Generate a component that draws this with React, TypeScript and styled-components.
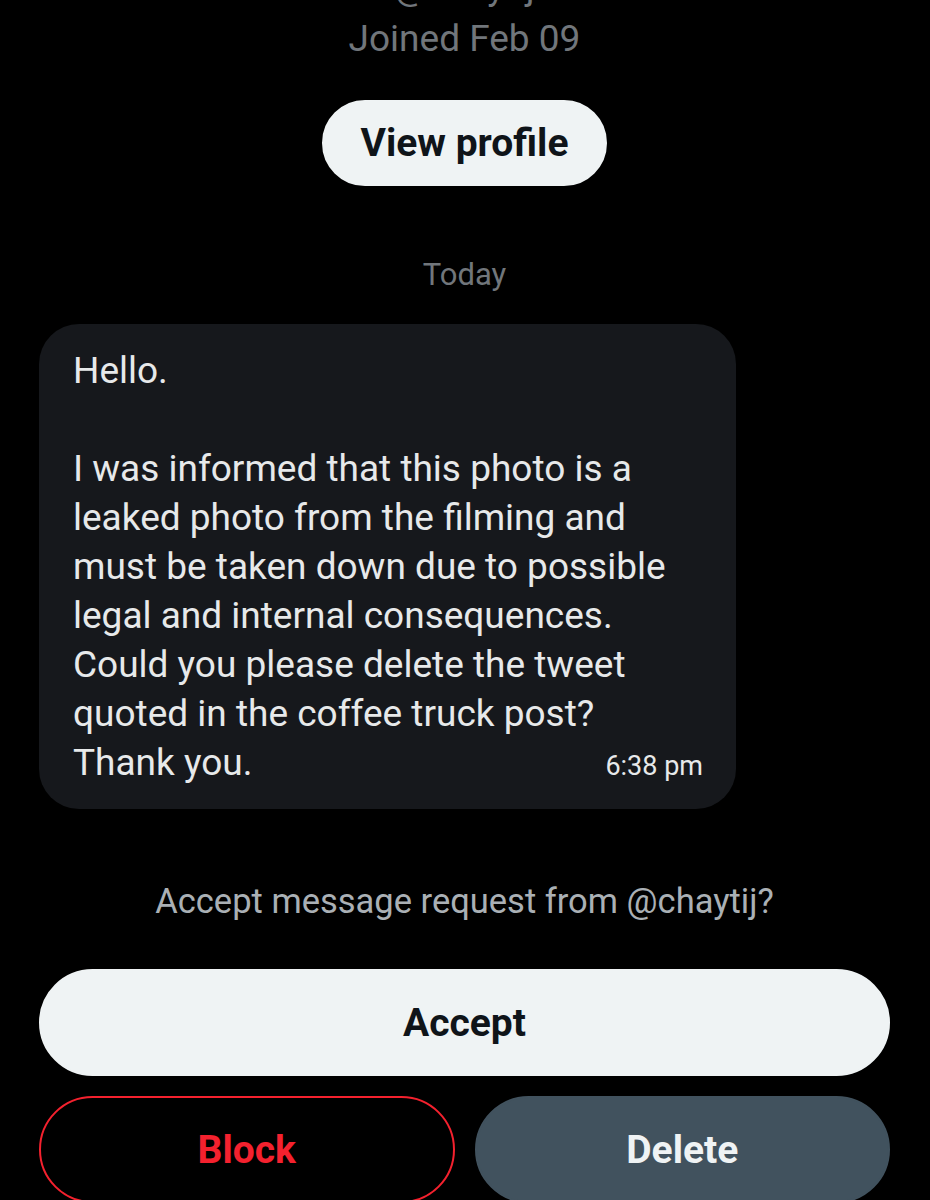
import React from 'react';
import styled, {createGlobalStyle} from 'styled-components';

const GlobalStyle = createGlobalStyle`
    html, body {
        margin: 0;
        padding: 0;
        background: #000;
    }

    body {
        font-family: Roboto, "Noto Sans", "Liberation Sans", sans-serif;
        -webkit-font-smoothing: antialiased;
    }
`;

const messageLines = [
    'I was informed that this photo is a',
    'leaked photo from the filming and',
    'must be taken down due to possible',
    'legal and internal consequences.',
    'Could you please delete the tweet',
    'quoted in the coffee truck post?',
];

export default function App() {
    return (
        <>
            <GlobalStyle/>
            <Page>
                <ProfileSummary>
                    <Handle>@chaytij</Handle>
                    <Joined>Joined Feb 09</Joined>
                    <PillButton $variant="light" $width="285px" $height="86px">View profile</PillButton>
                </ProfileSummary>

                <DayLabel>Today</DayLabel>

                <Bubble>
                    <MessageLine>Hello.</MessageLine>
                    <MessageLine>&nbsp;</MessageLine>
                    {messageLines.map(line => (
                        <MessageLine key={line}>{line}</MessageLine>
                    ))}
                    <BubbleFooter>
                        <MessageLine>Thank you.</MessageLine>
                        <Time>6:38 pm</Time>
                    </BubbleFooter>
                </Bubble>

                <RequestPrompt>Accept message request from @chaytij?</RequestPrompt>

                <Actions>
                    <PillButton $variant="light" $height="107px">Accept</PillButton>
                    <ActionRow>
                        <PillButton $variant="danger" $height="107px">Block</PillButton>
                        <PillButton $variant="muted" $height="107px">Delete</PillButton>
                    </ActionRow>
                </Actions>
            </Page>
        </>
    );
}

const Page = styled.div`
    width: 930px;
    box-sizing: border-box;
    padding: 0 40px 0 39px;
    display: flex;
    flex-direction: column;
    align-items: center;
    overflow: hidden;
    height: 1200px;
`;

const ProfileSummary = styled.div`
    display: flex;
    flex-direction: column;
    align-items: center;
    margin-top: -35px;
`;

const Handle = styled.div`
    font-size: 37px;
    line-height: 44px;
    margin-bottom: 8px;
    color: #71767b;
`;

const Joined = styled.div`
    font-size: 37px;
    line-height: 44px;
    color: #71767b;
`;

const variants = {
    light: {bg: '#eff3f4', fg: '#0f1419', border: '#eff3f4'},
    danger: {bg: '#000', fg: '#f4212e', border: '#f4212e'},
    muted: {bg: '#41525e', fg: '#eff3f4', border: '#41525e'},
};

const PillButton = styled.button<{ $variant: keyof typeof variants; $width?: string; $height: string }>`
    width: ${p => p.$width ?? '100%'};
    height: ${p => p.$height};
    margin-top: ${p => (p.$width ? '39px' : '0')};
    box-sizing: border-box;
    border-radius: 999px;
    border: 2px solid ${p => variants[p.$variant].border};
    background: ${p => variants[p.$variant].bg};
    color: ${p => variants[p.$variant].fg};
    font-family: Roboto, "Liberation Sans", sans-serif;
    font-weight: 700;
    font-size: 39px;
    display: flex;
    align-items: center;
    justify-content: center;
    padding: 0;
`;

const DayLabel = styled.div`
    margin-top: 71px;
    font-size: 31px;
    line-height: 36px;
    color: #71767b;
`;

const Bubble = styled.div`
    align-self: flex-start;
    margin-top: 31px;
    width: 697px;
    box-sizing: border-box;
    padding: 22px 33px 22px 34px;
    background: #16181c;
    border-radius: 40px;
    color: #e7e9ea;
`;

const MessageLine = styled.div`
    font-size: 37px;
    line-height: 49px;
    white-space: nowrap;
`;

const BubbleFooter = styled.div`
    display: flex;
    justify-content: space-between;
    align-items: baseline;
`;

const Time = styled.span`
    font-size: 27px;
    color: #e7e9ea;
`;

const RequestPrompt = styled.div`
    margin-top: 72px;
    font-size: 34.5px;
    line-height: 40px;
    color: #aab0b5;
`;

const Actions = styled.div`
    width: 100%;
    margin-top: 48px;
    display: flex;
    flex-direction: column;
    gap: 20px;
`;

const ActionRow = styled.div`
    display: grid;
    grid-template-columns: 1fr 1fr;
    gap: 20px;
`;
